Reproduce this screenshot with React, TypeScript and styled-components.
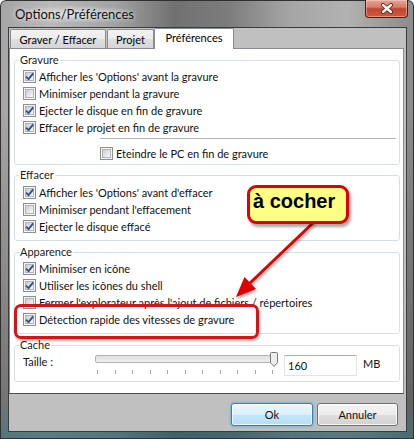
import React from "react";
import styled, { createGlobalStyle } from "styled-components";

const UI = `Lato, "Noto Sans", "DejaVu Sans", sans-serif`;

const GlobalStyle = createGlobalStyle`
  html, body { margin: 0; padding: 0; background: #ffffff; }
  #root { width: 414px; height: 439px; }
`;

const Window = styled.div`
  position: relative;
  width: 414px;
  height: 439px;
  display: flex;
  flex-direction: column;
  overflow: hidden;
  border-radius: 6px 6px 0 0;
  box-shadow: inset 0 0 0 1px #303030;
  background:
    linear-gradient(180deg, rgba(0,0,0,0) 0%, rgba(0,0,0,0) 25%, rgba(0,0,0,0.3) 92%, rgba(30,95,105,0.65) 100%),
    linear-gradient(90deg, #a4a4a4 0%, #b9b9b9 12%, #a2a2a2 28%, #717171 42%, #7c7c7c 55%, #a5a5a5 70%, #b2b2b2 84%, #8a8a8a 100%);
  font-family: ${UI};
  font-size: 11px;
  color: #000;
`;

const TitleBar = styled.div`
  flex: none;
  height: 27px;
  display: flex;
  align-items: flex-start;
  padding-left: 10px;
`;

const Title = styled.span`
  margin-top: 5px;
  padding: 0 5px;
  font-size: 13px;
  line-height: 18px;
  color: #111;
  background: radial-gradient(ellipse closest-side, rgba(255,255,255,0.55), rgba(255,255,255,0));
  text-shadow: 0 0 5px rgba(255,255,255,0.9);
`;

const CloseButton = styled.div`
  flex: none;
  margin-left: auto;
  margin-right: 6px;
  width: 43px;
  height: 18px;
  box-sizing: border-box;
  display: grid;
  place-items: center;
  border: 1px solid #4a1c14;
  border-top: none;
  border-radius: 0 0 4px 4px;
  background: linear-gradient(180deg, #e7a594 0%, #d77b66 42%, #c2442c 52%, #cf5a3e 100%);
  box-shadow: inset 0 0 0 1px rgba(255, 220, 210, 0.45);
`;

const Client = styled.div`
  flex: none;
  box-sizing: border-box;
  width: 399px;
  height: 405px;
  margin-left: 8px;
  border: 1px solid #3b3b3b;
  background: #c0c0c0;
  display: flex;
  flex-direction: column;
`;

const TabStrip = styled.div`
  flex: none;
  position: relative;
  z-index: 1;
  height: 20px;
  padding-left: 1px;
  display: flex;
  align-items: flex-end;
`;

const Tab = styled.div<{ $active?: boolean; $w: number }>`
  box-sizing: border-box;
  width: ${(p) => p.$w}px;
  height: ${(p) => (p.$active ? 21 : 19)}px;
  margin-bottom: ${(p) => (p.$active ? -1 : 0)}px;
  margin-left: ${(p) => (p.$active ? -1 : 0)}px;
  margin-right: ${(p) => (p.$active ? 0 : 1)}px;
  padding-top: ${(p) => (p.$active ? 0 : 1)}px;
  border: 1px solid #898c95;
  border-bottom: none;
  border-radius: 2px 2px 0 0;
  background: ${(p) =>
    p.$active ? "#ffffff" : "linear-gradient(180deg, #f2f2f2 0%, #ebebeb 50%, #dedede 51%, #d6d6d6 100%)"};
  text-align: center;
  line-height: 17px;
  white-space: nowrap;
`;

const Panel = styled.div`
  flex: 1;
  box-sizing: border-box;
  margin-right: 2px;
  padding: 3px 3px 0 4px;
  background: #ffffff;
  border: 1px solid #898c95;
  border-bottom-color: #4e4e4e;
  display: flex;
  flex-direction: column;
`;

const Group = styled.fieldset<{ $mt: number; $pb: number }>`
  margin: ${(p) => p.$mt}px 0 0 0;
  padding: 0 0 ${(p) => p.$pb}px 0;
  border: 1px solid #d5dfe5;
  border-radius: 3px;
  min-width: 0;
`;

const Legend = styled.legend`
  margin-left: 4px;
  padding: 0 1px;
  line-height: 16px;
  color: #1a1a1a;
`;

const Rows = styled.div<{ $pt?: number }>`
  padding-top: ${(p) => p.$pt ?? 0}px;
  display: flex;
  flex-direction: column;
`;

const CheckRow = styled.div<{ $indent?: number; $mt?: number }>`
  display: flex;
  align-items: center;
  gap: 3px;
  height: 17px;
  margin-top: ${(p) => p.$mt ?? 0}px;
  padding-left: ${(p) => p.$indent ?? 8}px;
  line-height: 17px;
  white-space: nowrap;
  color: #111;
`;

const Box = styled.span`
  position: relative;
  flex: none;
  box-sizing: border-box;
  width: 13px;
  height: 13px;
  border: 1px solid #8e8f8f;
  background: #f4f4f4;
  display: grid;
  place-items: center;
  &::before {
    content: "";
    position: absolute;
    inset: 1px;
    border: 1px solid #b0b4bb;
    background: linear-gradient(135deg, #c6cad0 0%, #e2e4e7 50%, #f9f9f9 100%);
  }
  svg {
    position: relative;
  }
`;

const Separator = styled.div`
  height: 1px;
  margin: 2px 3px 0 85px;
  background: #b4b4b4;
`;

const CacheRow = styled.div`
  display: flex;
  align-items: flex-start;
  height: 26px;
  padding-left: 8px;
  color: #111;
`;

const FieldLabel = styled.span`
  flex: none;
  width: 72px;
  line-height: 17px;
`;

const Slider = styled.div`
  flex: none;
  width: 181px;
  margin-top: 2px;
  display: flex;
  flex-direction: column;
`;

const Track = styled.div`
  position: relative;
  box-sizing: border-box;
  height: 8px;
  border: 1px solid #b3b3b3;
  border-radius: 2px;
  background: linear-gradient(180deg, #e0e0e0, #eeeeee);
`;

const Thumb = styled.svg`
  position: absolute;
  right: -3px;
  top: -4px;
`;

const Ticks = styled.div`
  display: flex;
  justify-content: space-between;
  height: 4px;
  margin-top: 7px;
  padding: 0 3px 0 2px;
`;

const Tick = styled.span`
  width: 1px;
  height: 4px;
  background: #a8a8a8;
`;

const TextBox = styled.div`
  flex: none;
  box-sizing: border-box;
  width: 73px;
  height: 21px;
  margin: 2px 0 0 8px;
  padding: 1px 0 0 3px;
  border: 1px solid #e2e3ea;
  border-top-color: #abadb3;
  background: #fff;
  line-height: 18px;
`;

const Unit = styled.span`
  margin: 2px 0 0 6px;
  line-height: 17px;
`;

const ButtonBar = styled.div`
  flex: none;
  box-sizing: border-box;
  height: 37px;
  padding: 9px 8px 0 0;
  display: flex;
  justify-content: flex-end;
  align-items: flex-start;
  gap: 4px;
`;

const Button = styled.div<{ $primary?: boolean; $w: number }>`
  box-sizing: border-box;
  width: ${(p) => p.$w}px;
  height: 23px;
  border-radius: 3px;
  border: 1px solid ${(p) => (p.$primary ? "#3c7fb1" : "#707070")};
  background: ${(p) =>
    p.$primary
      ? "linear-gradient(180deg, #eaf6fd 0%, #d9f0fc 50%, #c2e7fb 51%, #b3dff6 100%)"
      : "linear-gradient(180deg, #f4f4f4 0%, #ececec 50%, #dedede 51%, #d2d2d2 100%)"};
  box-shadow: ${(p) =>
    p.$primary
      ? "inset 0 0 0 1px rgba(255,255,255,0.75), 0 0 2px 1px rgba(72,170,230,0.55)"
      : "inset 0 0 0 1px rgba(255,255,255,0.8)"};
  text-align: center;
  line-height: 21px;
  color: #111;
`;

const Highlight = styled.div`
  position: absolute;
  left: 14px;
  top: 304px;
  width: 245px;
  height: 35px;
  box-sizing: border-box;
  border: 3px solid #d41515;
  border-radius: 7px;
  box-shadow: 1px 2px 3px rgba(0, 0, 0, 0.3);
  pointer-events: none;
  z-index: 5;
`;

const Callout = styled.div`
  position: absolute;
  left: 247px;
  top: 185px;
  width: 102px;
  height: 39px;
  box-sizing: border-box;
  padding-left: 3px;
  border: 3px solid #e00000;
  border-radius: 9px;
  background: #ffff84;
  box-shadow: 2px 3px 3px rgba(0, 0, 0, 0.35);
  font-family: "Liberation Sans", Arial, sans-serif;
  font-weight: bold;
  font-size: 20px;
  line-height: 27px;
  color: #000;
  white-space: nowrap;
  z-index: 6;
`;

const Arrow = styled.svg`
  position: absolute;
  left: 0;
  top: 0;
  pointer-events: none;
  z-index: 4;
`;

const Check = ({ on }: { on?: boolean }) => (
  <Box>
    {on && (
      <svg width="11" height="11" viewBox="0 0 11 11">
        <path d="M2 5.6 L4.5 8.2 L9.2 2.4" fill="none" stroke="#3a4f86" strokeWidth="1.9" strokeLinejoin="round" />
      </svg>
    )}
  </Box>
);

type Item = { label: string; on?: boolean };

const CheckList = ({ items, pt }: { items: Item[]; pt?: number }) => (
  <Rows $pt={pt}>
    {items.map((it) => (
      <CheckRow key={it.label}>
        <Check on={it.on} />
        <span>{it.label}</span>
      </CheckRow>
    ))}
  </Rows>
);

const gravure: Item[] = [
  { label: "Afficher les 'Options' avant la gravure", on: true },
  { label: "Minimiser pendant la gravure" },
  { label: "Ejecter le disque en fin de gravure", on: true },
  { label: "Effacer le projet en fin de gravure", on: true },
];

const effacer: Item[] = [
  { label: "Afficher les 'Options' avant d'effacer", on: true },
  { label: "Minimiser pendant l'effacement" },
  { label: "Ejecter le disque effacé", on: true },
];

const apparence: Item[] = [
  { label: "Minimiser en icône", on: true },
  { label: "Utiliser les icônes du shell", on: true },
  { label: "Fermer l'explorateur après l'ajout de fichiers / répertoires" },
  { label: "Détection rapide des vitesses de gravure", on: true },
];

export default function App() {
  const tip = { x: 236, y: 297 };
  return (
    <>
      <GlobalStyle />
      <Window>
        <TitleBar>
          <Title>Options/Préférences</Title>
          <CloseButton>
            <svg width="14" height="11" viewBox="0 0 14 11">
              <path d="M3 2 L11 9 M11 2 L3 9" stroke="#5a1a10" strokeWidth="4" strokeLinecap="round" />
              <path d="M3 2 L11 9 M11 2 L3 9" stroke="#ffffff" strokeWidth="2.4" strokeLinecap="round" />
            </svg>
          </CloseButton>
        </TitleBar>
        <Client>
          <TabStrip>
            <Tab $w={96}>Graver / Effacer</Tab>
            <Tab $w={47}>Projet</Tab>
            <Tab $w={80} $active>
              Préférences
            </Tab>
          </TabStrip>
          <Panel>
            <Group $mt={0} $pb={2}>
              <Legend>Gravure</Legend>
              <CheckList items={gravure} />
              <Separator />
              <CheckRow $indent={85} $mt={6}>
                <Check />
                <span>Eteindre le PC en fin de gravure</span>
              </CheckRow>
            </Group>
            <Group $mt={2} $pb={5}>
              <Legend>Effacer</Legend>
              <CheckList items={effacer} pt={1} />
            </Group>
            <Group $mt={3} $pb={5}>
              <Legend>Apparence</Legend>
              <CheckList items={apparence} />
            </Group>
            <Group $mt={3} $pb={2}>
              <Legend>Cache</Legend>
              <CacheRow>
                <FieldLabel>Taille :</FieldLabel>
                <Slider>
                  <Track>
                    <Thumb width="8" height="15" viewBox="0 0 8 15">
                      <path d="M0.5 1.5 Q0.5 0.5 1.5 0.5 L6.5 0.5 Q7.5 0.5 7.5 1.5 L7.5 10.5 L4 14.5 L0.5 10.5 Z" fill="#eeeeee" stroke="#7a7a7a" />
                    </Thumb>
                  </Track>
                  <Ticks>
                    {Array.from({ length: 11 }).map((_, i) => (
                      <Tick key={i} />
                    ))}
                  </Ticks>
                </Slider>
                <TextBox>160</TextBox>
                <Unit>MB</Unit>
              </CacheRow>
            </Group>
          </Panel>
          <ButtonBar>
            <Button $primary $w={82}>
              Ok
            </Button>
            <Button $w={81}>Annuler</Button>
          </ButtonBar>
        </Client>
        <Highlight />
        <Arrow width="414" height="439" viewBox="0 0 414 439">
          <g style={{ filter: "drop-shadow(1px 2px 1.5px rgba(0,0,0,0.35))" }}>
            <line x1="314" y1="222" x2="250" y2="283" stroke="#e00000" strokeWidth="3" />
            <polygon points={`${tip.x},${tip.y} 256,289 244.5,277`} fill="#e00000" />
          </g>
        </Arrow>
        <Callout>à cocher</Callout>
      </Window>
    </>
  );
}
